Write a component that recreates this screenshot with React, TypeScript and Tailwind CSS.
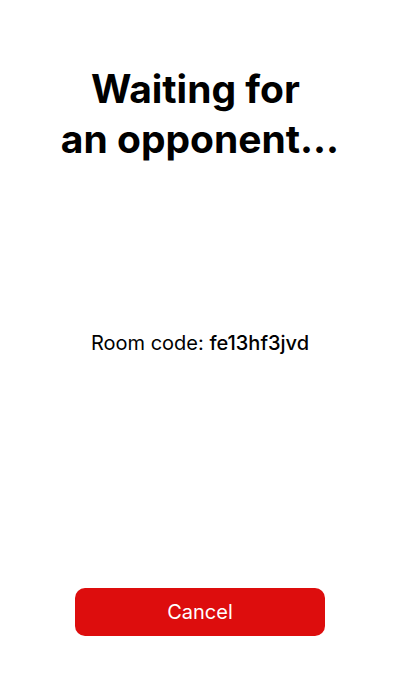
export default function App() {
  return (
    <div
      className="w-[400px] h-[700px] bg-white flex flex-col items-center"
      style={{ fontFamily: "Inter, 'Noto Sans', sans-serif" }}
    >
      <h1 className="mt-[64px] text-[39px] leading-[50px] font-bold text-black text-center">
        Waiting for{"\u00a0"}
        <br />
        an opponent...
      </h1>
      <p className="mt-[164px] text-[20px] leading-[30px] text-black">
        Room code: <span className="font-medium">fe13hf3jvd</span>
      </p>
      <button className="mt-auto mb-[64px] w-[250px] h-[48px] rounded-[10px] bg-[#dd0d0d] text-white text-[20px]">
        Cancel
      </button>
    </div>
  );
}
